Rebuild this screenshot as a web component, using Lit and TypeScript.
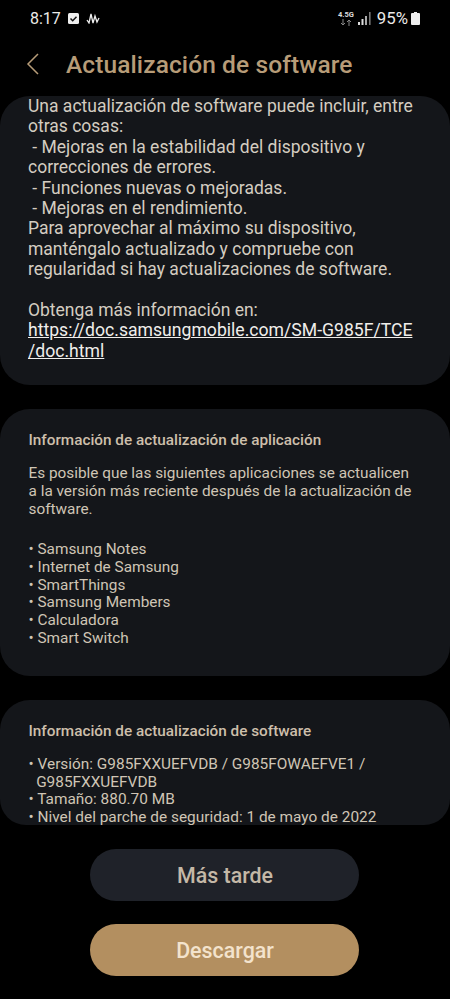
import { LitElement, html, css } from "lit";
import { customElement } from "lit/decorators.js";

@customElement("app-root")
export class AppRoot extends LitElement {
  static styles = css`
    :host { display: block; width: 450px; height: 999px; background: #000; overflow: hidden; font-family: Roboto, "Liberation Sans", sans-serif; }
    .page { display: flex; flex-direction: column; height: 999px; }
    .status { height: 36px; flex: none; display: flex; align-items: center; padding: 0 30px 0 30px; color: #eceae8; font-size: 16px; box-sizing: border-box; }
    .status .time { margin-right: 7px; }
    .status .wave { margin-left: 7px; }
    .status .spacer { flex: 1; }
    .net { display: flex; flex-direction: column; align-items: center; margin-right: 4px; font-size: 7.5px; font-weight: 700; line-height: 8px; color: #ddd; }
    .pct { font-size: 16.8px; margin: 0 3px 0 6px; }
    .header { height: 60px; flex: none; display: flex; align-items: center; padding: 0 0 4px 26px; box-sizing: border-box; }
    .header h1 { margin: 0 0 0 27px; font-size: 24.5px; font-weight: 500; color: #b79c78; letter-spacing: 0.1px; }
    .scroll { height: 729px; flex: none; overflow: hidden; display: flex; flex-direction: column; gap: 24px; border-radius: 26px; }
    .card { background: #14161a; border-radius: 30px; padding: 0 28.5px; flex: none; color: #cfc5b5; }
    .c1 { height: 289px; padding: 0 28px; font-size: 17.5px; line-height: 20.4px; color: #d4cdc1; box-sizing: border-box; }
    .c2 { height: 267px; box-sizing: border-box; padding: 22px 35px 0 28.5px; font-size: 15.35px; line-height: 17.9px; }
    .c3 { height: 180px; box-sizing: border-box; padding-top: 22px; font-size: 15.4px; line-height: 17.7px; }
    h2 { margin: 0 0 16px; font-size: 15.3px; line-height: 18px; font-weight: 500; color: #cdbfab; }
    p { margin: 0; white-space: pre-line; }
    .list { margin-top: 22px; }
    a { color: #f0eeeb; text-decoration: underline; font-size: 17.63px; }
    .buttons { flex: 1; display: flex; flex-direction: column; align-items: center; padding: 24px 1px 0 0; gap: 23px; }
    .btn { width: 269px; height: 52px; border-radius: 26px; display: flex; align-items: center; justify-content: center; font-size: 21.4px; font-weight: 500; padding: 1px 0 0 1px; box-sizing: border-box; }
    .later { background: #1f2229; color: #c4b8a7; }
    .dl { background: #b38f60; color: #f3e3cd; }
  `;

  render() {
    return html`<div class="page">
      <div class="status">
        <span class="time">8:17</span>
        <svg width="11" height="11" viewBox="0 0 11 11"><rect width="11" height="11" rx="1.5" fill="#eee"/><path d="M2.5 5.5l2.2 2.2 3.8-4" fill="none" stroke="#111" stroke-width="1.5"/></svg>
        <svg class="wave" width="15" height="12" viewBox="0 0 15 12"><path d="M1 8l2 3 2-9 2 9 2-7 2 6 2-4" fill="none" stroke="#eee" stroke-width="1.3"/></svg>
        <span class="spacer"></span>
        <span class="net"><span>4.5G</span><svg width="12" height="7" viewBox="0 0 12 7"><path d="M3 0v6M1 4l2 2 2-2M9 7V1M7 3l2-2 2 2" fill="none" stroke="#888" stroke-width="1"/></svg></span>
        <svg width="13" height="13" viewBox="0 0 13 13"><rect x="0" y="10" width="2" height="3" fill="#ddd"/><rect x="3.5" y="7" width="2" height="6" fill="#ddd"/><rect x="7" y="4" width="2" height="9" fill="#aaa"/><rect x="11" y="0" width="1.6" height="13" fill="#777"/></svg>
        <span class="pct">95%</span>
        <svg width="9" height="13" viewBox="0 0 9 13"><path d="M3 0h3v1h2a1 1 0 0 1 1 1v10a1 1 0 0 1-1 1H1a1 1 0 0 1-1-1V2a1 1 0 0 1 1-1h2z" fill="#eee"/></svg>
      </div>
      <div class="header">
        <svg width="13" height="22" viewBox="0 0 13 22"><path d="M12 1L2 11l10 10" fill="none" stroke="#b79c78" stroke-width="1.5"/></svg>
        <h1>Actualización de software</h1>
      </div>
      <div class="scroll">
        <div class="card c1"><p>Una actualización de software puede incluir, entre otras cosas:
 &nbsp;- Mejoras en la estabilidad del dispositivo y
 correcciones de errores.
 &nbsp;- Funciones nuevas o mejoradas.
 &nbsp;- Mejoras en el rendimiento.
Para aprovechar al máximo su dispositivo, manténgalo actualizado y compruebe con regularidad si hay actualizaciones de software.

Obtenga más información en:
<a>https://doc.samsungmobile.com/SM-G985F/TCE
/doc.html</a></p></div>
        <div class="card c2">
          <h2>Información de actualización de aplicación</h2>
          <p>Es posible que las siguientes aplicaciones se actualicen a la versión más reciente después de la actualización de software.</p>
          <p class="list">• Samsung Notes
• Internet de Samsung
• SmartThings
• Samsung Members
• Calculadora
• Smart Switch</p>
        </div>
        <div class="card c3">
          <h2>Información de actualización de software</h2>
          <p>• Versión: G985FXXUEFVDB / G985FOWAEFVE1 /
 &nbsp;&nbsp;G985FXXUEFVDB
• Tamaño: 880.70 MB
• Nivel del parche de seguridad: 1 de mayo de 2022</p>
        </div>
      </div>
      <div class="buttons">
        <div class="btn later">Más tarde</div>
        <div class="btn dl">Descargar</div>
      </div>
    </div>`;
  }
}
